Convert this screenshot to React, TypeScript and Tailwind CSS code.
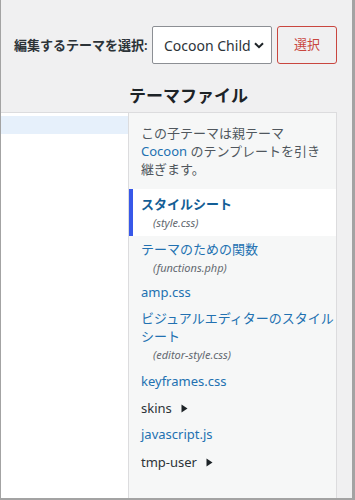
import React from "react";

const FONT = '"Noto Sans", "Noto Sans CJK JP", sans-serif';

type Item = {
  name: React.ReactNode;
  desc?: string;
  mt: string;
  folder?: boolean;
};

const Triangle = () => (
  <svg width="7" height="9" viewBox="0 0 7 9" className="ml-[9px] mb-[3px] inline-block">
    <path d="M0.5 0.5 L6.5 4.5 L0.5 8.5 Z" fill="#1d2327" />
  </svg>
);

export default function App() {
  const items: Item[] = [
    { name: "テーマのための関数", desc: "(functions.php)", mt: "mt-[4px]" },
    { name: "amp.css", mt: "mt-[7px]" },
    {
      name: (
        <>
          ビジュアルエディターのスタイル
          <br />
          シート
        </>
      ),
      desc: "(editor-style.css)",
      mt: "mt-[8px]",
    },
    { name: "keyframes.css", mt: "mt-[9px]" },
    { name: "skins", mt: "mt-[9px]", folder: true },
    { name: "javascript.js", mt: "mt-[8px]" },
    { name: "tmp-user", mt: "mt-[10px]", folder: true },
  ];

  return (
    <div
      className="w-[355px] h-[500px] bg-[#f0f0f1] border-l border-r-[3px] border-b-2 border-[#a3a3a3] flex flex-col overflow-hidden"
      style={{ fontFamily: FONT }}
    >
      {/* header row */}
      <div className="flex items-center pl-[13px] mt-[26px]">
        <span className="text-[13px] font-semibold text-[#2c3338] whitespace-nowrap leading-none">
          編集するテーマを選択:
        </span>
        <div className="ml-auto mr-[5px] w-[120px] h-[38px] bg-white border border-[#8c8f94] rounded-[2px] flex items-center pl-[11px] pr-[12px]">
          <span className="text-[14px] text-[#2c3338] whitespace-nowrap">Cocoon Child</span>
          <svg width="10" height="7" viewBox="0 0 10 7" className="ml-[3px] shrink-0">
            <path d="M1 1.2 L5 5.2 L9 1.2" stroke="#1d2327" strokeWidth="2" fill="none" />
          </svg>
        </div>
        <button className="w-[60px] h-[38px] mr-[15px] border border-[#c9463f] rounded-[3px] text-[13px] text-[#c9463f] bg-transparent">
          選択
        </button>
      </div>

      {/* heading */}
      <div className="mt-[20px] pl-[128px] h-[24px] flex items-center">
        <h2 className="text-[17px] font-bold text-[#1d2327] leading-[24px] whitespace-nowrap">テーマファイル</h2>
      </div>

      {/* panels */}
      <div className="mt-[4px] flex flex-1 min-h-0">
        <div className="w-[128px] bg-white border-t border-r border-[#dcdcde] pt-[3px]">
          <div className="h-[18px] bg-[#e6f0fb]" />
        </div>
        <div className="w-[208px] bg-[#f6f7f7] border-t border-r border-[#dcdcde] pt-[11px]">
          <p className="pl-[12px] text-[13px] leading-[18px] text-[#50575e] whitespace-nowrap">
            この子テーマは親テーマ
            <br />
            <span className="text-[#2271b1]">Cocoon</span> のテンプレートを引き
            <br />
            継ぎます。
          </p>

          <div className="mt-[11px] bg-white border-l-4 border-[#3858e9] pl-[8px] pt-[6px] pb-[5px]">
            <div className="text-[13px] leading-[18px] font-bold text-[#135e96] whitespace-nowrap">
              スタイルシート
            </div>
            <div className="mt-[2px] pl-[12px] text-[11px] leading-[16px] italic text-[#646970]">
              (style.css)
            </div>
          </div>

          {items.map((it, i) => (
            <div key={i} className={`${it.mt} pl-[12px]`}>
              <div
                className={`text-[13px] leading-[18px] whitespace-nowrap ${
                  it.folder ? "text-[#2c3338]" : "text-[#2271b1]"
                }`}
              >
                {it.name}
                {it.folder && <Triangle />}
              </div>
              {it.desc && (
                <div className="mt-[2px] pl-[12px] text-[11px] leading-[16px] italic text-[#646970]">
                  {it.desc}
                </div>
              )}
            </div>
          ))}
        </div>
      </div>
    </div>
  );
}
